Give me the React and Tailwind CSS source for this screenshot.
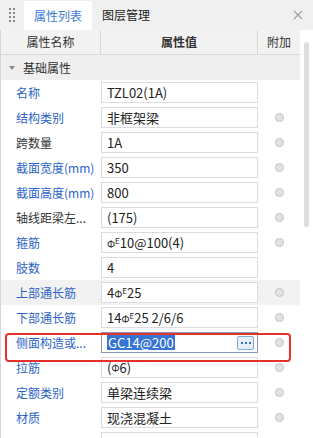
import React from "react";

const F = { fontFamily: '"Microsoft YaHei","Noto Sans CJK SC","Noto Sans",sans-serif' };

function Rebar() {
  return (
    <span className="inline-flex items-start">
      <span className="text-[10px] leading-none mt-[3px]">Φ</span>
      <span className="text-[8px] leading-none mt-[1px]">E</span>
    </span>
  );
}

const rows = [
  { label: "名称", blue: true, value: "TZL02(1A)", dot: false },
  { label: "结构类别", blue: true, value: "非框架梁", dot: true },
  { label: "跨数量", blue: false, value: "1A", dot: true },
  { label: "截面宽度(mm)", blue: true, value: "350", dot: true },
  { label: "截面高度(mm)", blue: true, value: "800", dot: true },
  { label: "轴线距梁左...", blue: false, value: "(175)", dot: true },
  { label: "箍筋", blue: true, value: <><Rebar />10@100(4)</>, dot: true },
  { label: "肢数", blue: true, value: "4", dot: false },
  { label: "上部通长筋", blue: true, value: <>4<Rebar />25</>, dot: true, hover: true },
  { label: "下部通长筋", blue: true, value: <>14<Rebar />25 2/6/6</>, dot: true },
  { label: "侧面构造或...", blue: true, value: "GC14@200", dot: true, edit: true },
  { label: "拉筋", blue: true, value: <>(<span className="text-[10px]">Φ</span>6)</>, dot: true },
  { label: "定额类别", blue: true, value: "单梁连续梁", dot: true },
  { label: "材质", blue: true, value: "现浇混凝土", dot: true },
  { label: "", blue: true, value: "", dot: false },
];

function Dot() {
  return <span className="block w-[9px] h-[9px] rounded-full bg-[#e2e2e2] border border-[#c4c4c4]" />;
}

export default function App() {
  return (
    <div className="w-[313px] h-[438px] overflow-hidden bg-white relative text-[12px] text-[#333]" style={F}>
      {/* tab bar */}
      <div className="h-[30px] bg-[#f0f0f0] flex items-stretch">
        <div className="w-[24px] flex items-center justify-center">
          <div className="grid grid-cols-2 gap-x-[2px] gap-y-[2px]">
            {Array.from({ length: 8 }).map((_, i) => (
              <span key={i} className="block w-[2px] h-[2px] bg-[#8a8a8a]" />
            ))}
          </div>
        </div>
        <div className="w-[68px] mt-[1px] bg-white flex items-center justify-center text-[#3a7bd5] text-[12px]">属性列表</div>
        <div className="w-[68px] flex items-center justify-center text-[12px] text-[#222]">图层管理</div>
        <div className="flex-1" />
        <div className="w-[30px] flex items-center justify-center text-[#9a9a9a]">
          <svg width="10" height="10" viewBox="0 0 10 10">
            <path d="M1 1L9 9M9 1L1 9" stroke="#a0a0a0" strokeWidth="1.1" />
          </svg>
        </div>
      </div>

      <div className="flex border-l border-[#d6d6d6]">
        <div className="w-[299px]">
          {/* header */}
          <div className="grid grid-cols-[100px_157px_42px] h-[25px] bg-[#f2f2f2] border-b border-[#d8d8d8] text-[12px] text-[#333]">
            <div className="flex items-center justify-center border-r border-[#d8d8d8]">属性名称</div>
            <div className="flex items-center justify-center border-r border-[#d8d8d8] font-bold">属性值</div>
            <div className="flex items-center justify-center">附加</div>
          </div>
          {/* group */}
          <div className="h-[25px] bg-[#efefef] flex items-center">
            <span className="w-[22px] flex justify-center">
              <svg width="6" height="4" viewBox="0 0 6 4"><path d="M0 0H6L3 4Z" fill="#8a8a8a" /></svg>
            </span>
            <span className="text-[12px] text-[#333]">基础属性</span>
          </div>
          {rows.map((r, i) => (
            <div key={i} className={`grid grid-cols-[100px_157px_42px] h-[25px] items-center ${r.hover ? "bg-[#f2f2f2]" : ""}`}>
              <div className={`pl-[15px] truncate ${r.blue ? "text-[#2b63c6]" : "text-[#333]"}`}>{r.label}</div>
              {r.edit ? (
                <div className="h-[21px] border border-[#8a97b8] bg-white flex items-center pl-[5px] pr-[3px] text-[13px]">
                  <span className="bg-[#3574d4] text-white leading-[15px] px-px">{r.value}</span>
                  <span className="flex-1" />
                  <span className="w-[17px] h-[14px] rounded-[2px] border border-[#7fa8dd] bg-[#e6f0fb] flex items-center justify-center gap-[2px]">
                    <span className="w-[2px] h-[2px] bg-[#3a6fbf]" />
                    <span className="w-[2px] h-[2px] bg-[#3a6fbf]" />
                    <span className="w-[2px] h-[2px] bg-[#3a6fbf]" />
                  </span>
                </div>
              ) : (
                <div className="h-[21px] border border-[#dcdcdc] bg-white flex items-center pl-[5px] text-[#222] text-[13px] whitespace-nowrap overflow-hidden">
                  {r.value}
                </div>
              )}
              <div className="flex justify-center">{r.dot ? <Dot /> : null}</div>
            </div>
          ))}
        </div>
        <div className="w-[13px] relative">
          <div className="absolute left-[4px] top-[12px] w-[5px] h-[185px] rounded-full bg-[#dedede]" />
        </div>
      </div>

      {/* red highlight box */}
      <div className="absolute left-[5px] top-[333px] w-[286px] h-[29px] border-2 border-[#e5302c] rounded-[4px] pointer-events-none" />
    </div>
  );
}
